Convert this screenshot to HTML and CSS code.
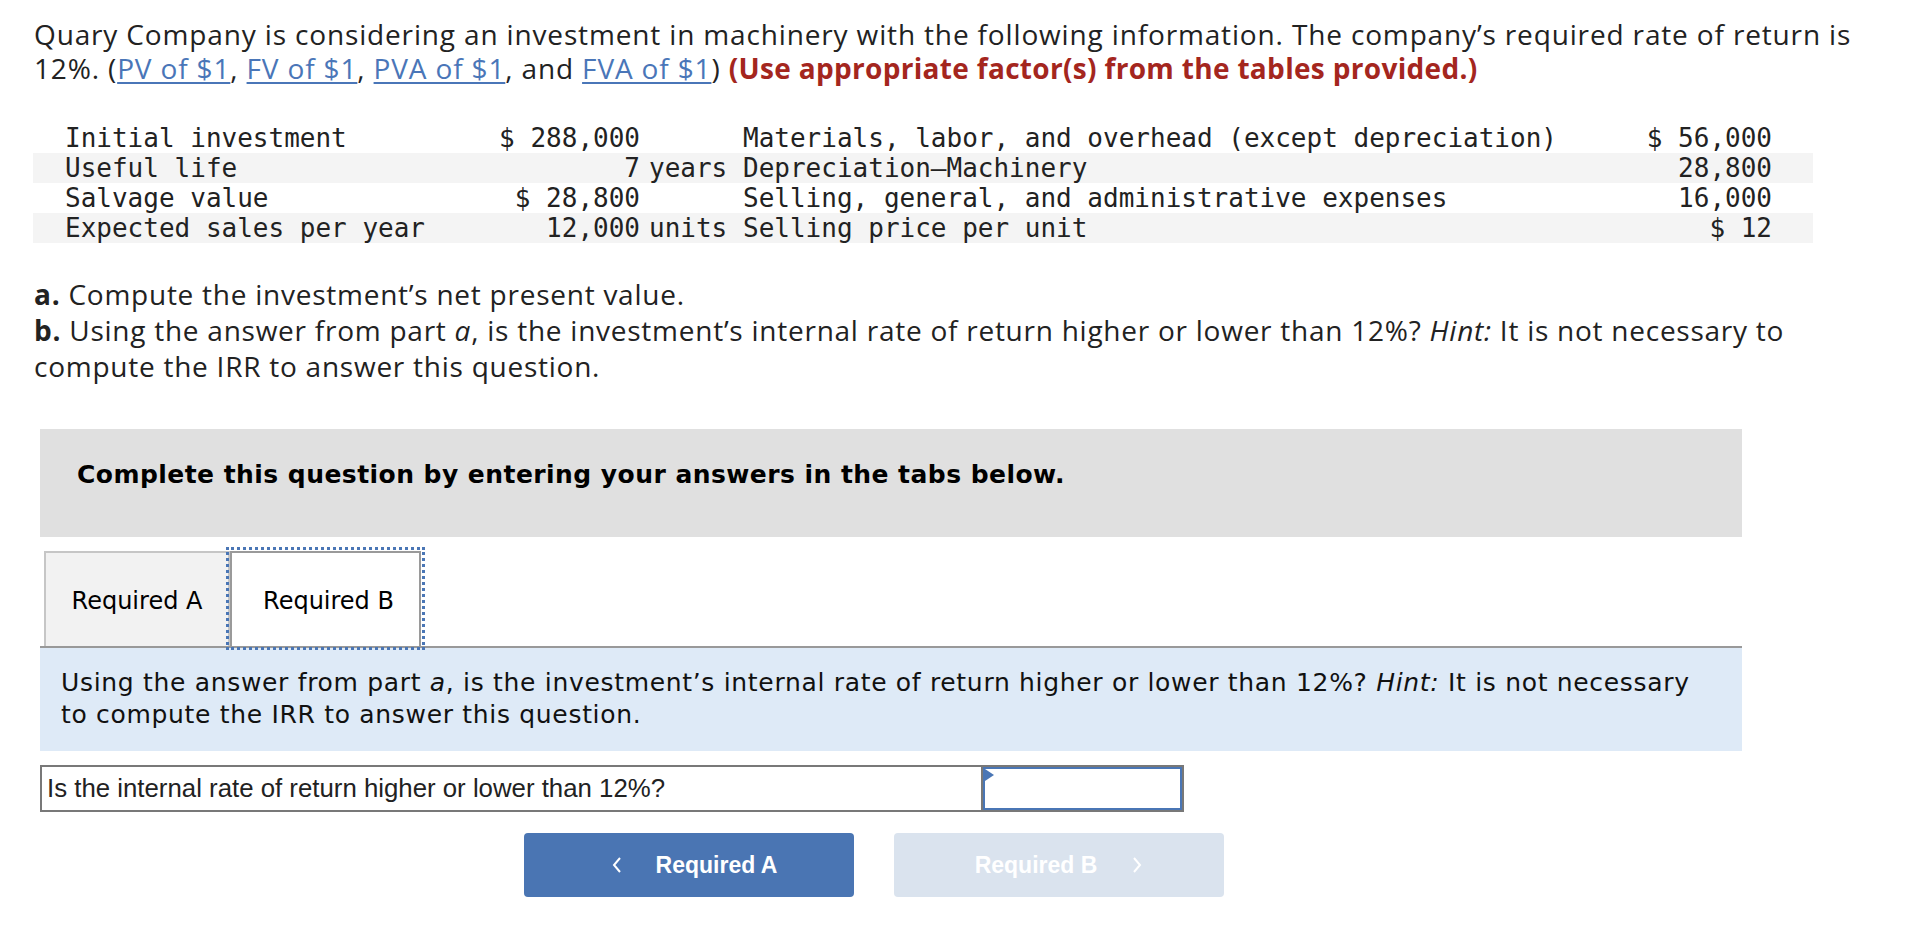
FILE: index.html
```html
<!DOCTYPE html>
<html lang="en">
<head>
<meta charset="utf-8">
<title>Quary Company</title>
<link rel="stylesheet" href="styles.css">
</head>
<body>
<div class="page">
  <p class="intro">Quary Company is considering an investment in machinery with the following information. The company’s required rate of return is 12%. (<a href="#">PV of $1</a>, <a href="#">FV of $1</a>, <a href="#">PVA of $1</a>, and <a href="#">FVA of $1</a>) <strong class="warn">(Use appropriate factor(s) from the tables provided.)</strong></p>

  <table class="data">
    <colgroup>
      <col class="c-label"><col class="c-amt"><col class="c-unit"><col class="c-desc"><col class="c-val">
    </colgroup>
    <tr>
      <td class="label">Initial investment</td><td class="amt">$ 288,000</td><td class="unit"></td>
      <td class="desc">Materials, labor, and overhead (except depreciation)</td><td class="val">$ 56,000</td>
    </tr>
    <tr class="alt">
      <td class="label">Useful life</td><td class="amt">7</td><td class="unit">years</td>
      <td class="desc">Depreciation—Machinery</td><td class="val">28,800</td>
    </tr>
    <tr>
      <td class="label">Salvage value</td><td class="amt">$ 28,800</td><td class="unit"></td>
      <td class="desc">Selling, general, and administrative expenses</td><td class="val">16,000</td>
    </tr>
    <tr class="alt">
      <td class="label">Expected sales per year</td><td class="amt">12,000</td><td class="unit">units</td>
      <td class="desc">Selling price per unit</td><td class="val">$ 12</td>
    </tr>
  </table>

  <div class="parts">
    <p><b>a.</b> Compute the investment’s net present value.</p>
    <p><b>b.</b> Using the answer from part <i>a</i>, is the investment’s internal rate of return higher or lower than 12%? <i>Hint:</i> It is not necessary to compute the IRR to answer this question.</p>
  </div>

  <div class="panel">
    <div class="instr">Complete this question by entering your answers in the tabs below.</div>

    <div class="tabs">
      <div class="tab">Required A</div>
      <div class="tab active">Required B</div>
    </div>

    <div class="qbox">Using the answer from part <i>a</i>, is the investment’s internal rate of return higher or lower than 12%? <i>Hint:</i> It is not necessary to compute the IRR to answer this question.</div>

    <div class="answer-row">
      <div class="q">Is the internal rate of return higher or lower than 12%?</div>
      <div class="select"></div>
    </div>

    <div class="nav">
      <button class="btn prev"><svg class="chev" width="12" height="20" viewBox="0 0 12 20"><polyline points="9,3 3,10 9,17" fill="none" stroke="#fff" stroke-width="2"/></svg><span>Required A</span></button>
      <button class="btn next"><span>Required B</span><svg class="chev" width="12" height="20" viewBox="0 0 12 20"><polyline points="3,3 9,10 3,17" fill="none" stroke="#fff" stroke-width="2"/></svg></button>
    </div>
  </div>
</div>
</body>
</html>
```

FILE: styles.css
```css
html, body {
  margin: 0;
  padding: 0;
  background: #fff;
}

body {
  font-family: "Open Sans", "Liberation Sans", sans-serif;
  color: #222;
}

.page {
  padding-top: 17px;
}

.intro {
  margin: 0 0 0 34px;
  width: 1845px;
  font-size: 28px;
  letter-spacing: 0.85px;
  line-height: 34px;
}

.intro a {
  color: #4a76b8;
  text-decoration: underline;
  text-underline-offset: 3px;
}

.warn {
  color: #a4261e;
  font-weight: 700;
  letter-spacing: 0.32px;
}

.data {
  margin: 38px 0 0 33px;
  width: 1780px;
  border-collapse: collapse;
  table-layout: fixed;
  font-family: "DejaVu Sans Mono", monospace;
  font-size: 26px;
  color: #222;
}

.data td {
  padding: 0;
  height: 30px;
  line-height: 30px;
  white-space: nowrap;
}

.data tr.alt {
  background: #f4f4f4;
}

.c-label { width: 464px; }
.c-amt { width: 143px; }
.c-unit { width: 103px; }
.c-desc { width: auto; }
.c-val { width: 200px; }

.data .label { padding-left: 32px; }
.data .amt { text-align: right; }
.data .unit { padding-left: 9px; }
.data .val { text-align: right; padding-right: 41px; }

.parts {
  margin: 33px 0 0 34px;
  width: 1840px;
  font-size: 28px;
  letter-spacing: 0.75px;
  line-height: 36px;
}

.parts p {
  margin: 0;
}

.panel {
  margin: 45px 0 0 40px;
  width: 1702px;
}

.instr {
  background: #e0e0e0;
  padding: 31px 37px 47px;
  font-family: "DejaVu Sans", Verdana, sans-serif;
  font-weight: 700;
  font-size: 25px;
  letter-spacing: 0.45px;
  line-height: 30px;
  color: #000;
}

.tabs {
  margin-top: 14px;
  padding-left: 4px;
  display: flex;
  border-bottom: 2px solid #999;
  font-family: "DejaVu Sans", Verdana, sans-serif;
  font-size: 24px;
  color: #000;
}

.tab {
  height: 95px;
  display: flex;
  align-items: center;
  justify-content: center;
  box-sizing: border-box;
  padding-top: 2px;
}

.tab:first-child {
  width: 186px;
  background: #f2f2f2;
  border: 2px solid #c6c6c6;
  border-bottom: none;
}

.tab.active {
  width: 191px;
  background: #fff;
  border: 2px solid #9a9a9a;
  border-bottom: none;
  outline: 3px dotted #4a76b5;
  outline-offset: 1px;
  padding-left: 6px;
}

.qbox {
  background: #deeaf7;
  padding: 19px 40px 20px 21px;
  font-family: "DejaVu Sans", Verdana, sans-serif;
  font-size: 25px;
  letter-spacing: 0.68px;
  line-height: 32px;
  color: #111;
}

.answer-row {
  margin-top: 14px;
  width: 1144px;
  height: 47px;
  box-sizing: border-box;
  border: 2px solid #787878;
  display: flex;
}

.answer-row .q {
  flex: 1;
  font-family: "Liberation Sans", Arial, sans-serif;
  font-size: 25.8px;
  line-height: 43px;
  padding-left: 5px;
  color: #222;
}

.answer-row .select {
  position: relative;
  width: 201px;
  box-sizing: border-box;
  border-left: 2px solid #787878;
  box-shadow: inset 0 0 0 2px #4a76b5;
}

.answer-row .select::before {
  content: "";
  position: absolute;
  left: 2px;
  top: 2px;
  border-left: 9px solid #4a76b5;
  border-top: 6px solid transparent;
  border-bottom: 6px solid transparent;
}

.nav {
  margin-top: 21px;
  padding-left: 484px;
  display: flex;
  gap: 40px;
}

.btn {
  width: 330px;
  height: 64px;
  border: none;
  border-radius: 4px;
  display: flex;
  align-items: center;
  justify-content: center;
  gap: 33px;
  font-family: "Liberation Sans", Arial, sans-serif;
  font-weight: 700;
  font-size: 23px;
  color: #fff;
  padding: 0;
}

.btn.prev {
  background: #4a75b3;
  padding-left: 10px;
}

.btn.next {
  background: #dae3ee;
  gap: 34px;
}

.chev {
  display: block;
}
```
